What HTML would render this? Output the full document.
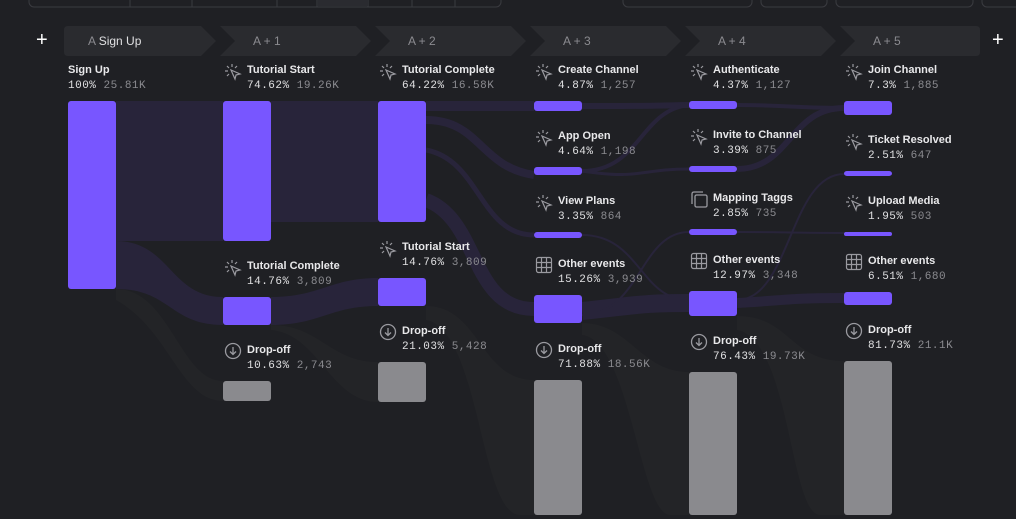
<!DOCTYPE html>
<html><head><meta charset="utf-8"><style>
body{margin:0;width:1016px;height:519px;background:#1f2024;overflow:hidden;font-family:"Liberation Sans",sans-serif;position:relative}
.l{position:absolute;color:#e8e8ea;font-size:11px;font-weight:bold;white-space:nowrap}
.s{position:absolute;font-family:"Liberation Mono",monospace;font-size:11px;color:#e0e0e2;white-space:nowrap;letter-spacing:0.5px}
.s span{color:#8b8b90}
.hd{position:absolute;top:34px;font-size:12px;color:#8b8b90}
.pl{position:absolute;top:30px;color:#fff;font-size:20px;line-height:20px}
</style></head><body>
<svg width="1016" height="519" style="position:absolute;left:0;top:0">
<g fill="none" stroke="#3a3b40">
<rect x="29" y="-10" width="472" height="17" rx="5"/>
<line x1="130" y1="-2" x2="130" y2="7"/><line x1="192" y1="-2" x2="192" y2="7"/><line x1="277" y1="-2" x2="277" y2="7"/><line x1="317" y1="-2" x2="317" y2="7"/><line x1="368" y1="-2" x2="368" y2="7"/><line x1="412" y1="-2" x2="412" y2="7"/><line x1="455" y1="-2" x2="455" y2="7"/>
<rect x="623" y="-10" width="129" height="17" rx="5"/><rect x="761" y="-10" width="66" height="17" rx="5"/><rect x="836" y="-10" width="137" height="17" rx="5"/><rect x="982" y="-10" width="50" height="17" rx="5"/>
</g>
<rect x="318" y="-2" width="50" height="8" fill="#2a2b30"/>
<g fill="#2a2b2f">
<path d="M68 26H201L216 41L201 56H68Q64 56 64 52V30Q64 26 68 26Z"/>
<path d="M220 26H356L371 41L356 56H220L235 41Z"/>
<path d="M375 26H511L526 41L511 56H375L390 41Z"/>
<path d="M530 26H666L681 41L666 56H530L545 41Z"/>
<path d="M685 26H821L836 41L821 56H685L700 41Z"/>
<path d="M840 26H976Q980 26 980 30V52Q980 56 976 56H840L855 41Z"/>
</g>
<g fill="#232427">
<path d="M116 289C170 289 180 381 223 381V401C180 401 170 330 116 300Z"/>
<path d="M271 325C320 325 330 362 378 362V402C330 402 320 335 271 330Z"/>
<path d="M426 306C480 306 480 380 534 380V515H520C480 515 480 330 426 320Z"/>
<path d="M582 323C630 323 640 372 689 372V515H670C640 515 630 340 582 335Z"/>
<path d="M737 316C790 316 790 361 844 361V515H820C790 515 790 340 737 330Z"/>
</g>
<g fill="#28243a">
<rect x="116" y="101" width="107" height="140"/>
<path d="M116 241C170 241 170 297 223 297V325C170 325 170 289 116 289Z"/>
<rect x="271" y="101" width="107" height="121"/>
<path d="M271 297C320 297 330 278 378 278V306C330 306 320 325 271 325Z"/>
<path d="M426 101H534V111H426Z"/>
<path d="M426 120C480 120 480 167 534 175" stroke="#28243a" stroke-width="8" fill="none"/>
<path d="M426 150C480 160 480 235 534 235" stroke="#28243a" stroke-width="5" fill="none"/>
<path d="M426 200C480 220 470 309 534 309" stroke="#28243a" stroke-width="14" fill="none"/>
<path d="M582 311C640 305 640 303 689 303" stroke="#28243a" stroke-width="18" fill="none"/>
<path d="M737 303C790 300 790 298 844 298" stroke="#28243a" stroke-width="10" fill="none"/>
<path d="M582 106C640 106 640 106 689 105" stroke="#28243a" stroke-width="6" fill="none"/>
<path d="M582 171C640 171 640 110 689 105" stroke="#28243a" stroke-width="4" fill="none"/>
<path d="M582 171C640 180 640 169 689 169" stroke="#28243a" stroke-width="3" fill="none"/>
<path d="M737 169C790 169 790 108 844 108" stroke="#28243a" stroke-width="6" fill="none"/>
<path d="M737 105C790 105 790 108 844 108" stroke="#28243a" stroke-width="4" fill="none"/>
<path d="M737 232C790 232 790 233 844 233" stroke="#28243a" stroke-width="2" fill="none"/>
<path d="M737 300C790 300 790 174 844 174" stroke="#28243a" stroke-width="2" fill="none"/>
<path d="M582 235C640 235 640 300 689 300" stroke="#28243a" stroke-width="2" fill="none"/>
<path d="M582 315C640 315 640 232 689 232" stroke="#28243a" stroke-width="2" fill="none"/>
</g>
<g fill="#7856ff">
<rect x="68" y="101" width="48" height="188" rx="3"/>
<rect x="223" y="101" width="48" height="140" rx="3"/><rect x="223" y="297" width="48" height="28" rx="3"/>
<rect x="378" y="101" width="48" height="121" rx="3"/><rect x="378" y="278" width="48" height="28" rx="3"/>
<rect x="534" y="101" width="48" height="10" rx="3"/><rect x="534" y="167" width="48" height="8" rx="3"/><rect x="534" y="232" width="48" height="6" rx="3"/><rect x="534" y="295" width="48" height="28" rx="3"/>
<rect x="689" y="101" width="48" height="8" rx="3"/><rect x="689" y="166" width="48" height="6" rx="3"/><rect x="689" y="229" width="48" height="6" rx="3"/><rect x="689" y="291" width="48" height="25" rx="3"/>
<rect x="844" y="101" width="48" height="14" rx="3"/><rect x="844" y="171" width="48" height="5" rx="3"/><rect x="844" y="232" width="48" height="4" rx="2"/><rect x="844" y="292" width="48" height="13" rx="3"/>
</g>
<g fill="#8a8a8e">
<rect x="223" y="381" width="48" height="20" rx="3"/><rect x="378" y="362" width="48" height="40" rx="3"/>
<rect x="534" y="380" width="48" height="135" rx="3"/><rect x="689" y="372" width="48" height="143" rx="3"/><rect x="844" y="361" width="48" height="154" rx="3"/>
</g>
<defs>
<g id="ck" fill="none" stroke="#9a9aa0" stroke-width="1.2"><path d="M7 0V3M2 2L4 4M0 7H3M2 12L4 10M12 2L10 4"/><path d="M6 6L15 10L11 11L10 15Z"/></g>
<g id="dr" fill="none" stroke="#9a9aa0" stroke-width="1.3"><circle cx="8" cy="8" r="7.5"/><path d="M8 4V11M5 8.5L8 11.5L11 8.5"/></g>
<g id="gr" fill="none" stroke="#9a9aa0" stroke-width="1.2"><rect x="0.5" y="0.5" width="15" height="15" rx="2"/><path d="M5.5 1V15M10.5 1V15M1 5.5H15M1 10.5H15"/></g>
<g id="cp" fill="none" stroke="#9a9aa0" stroke-width="1.3"><path d="M1 13V3Q1 1 3 1H12"/><rect x="4" y="4" width="12" height="12" rx="1.5"/></g>
</defs>
<use href="#ck" x="225" y="64"/><use href="#ck" x="380" y="64"/><use href="#ck" x="536" y="64"/><use href="#ck" x="691" y="64"/><use href="#ck" x="846" y="64"/>
<use href="#ck" x="225" y="260"/><use href="#ck" x="380" y="241"/><use href="#ck" x="536" y="130"/><use href="#ck" x="536" y="195"/><use href="#ck" x="691" y="129"/><use href="#ck" x="846" y="134"/><use href="#ck" x="846" y="195"/>
<use href="#dr" x="225" y="343"/><use href="#dr" x="380" y="324"/><use href="#dr" x="536" y="342"/><use href="#dr" x="691" y="334"/><use href="#dr" x="846" y="323"/>
<use href="#gr" x="536" y="257"/><use href="#gr" x="691" y="253"/><use href="#gr" x="846" y="254"/>
<use href="#cp" x="691" y="191"/>
</svg>
<div class="pl" style="left:36px">+</div><div class="pl" style="left:992px">+</div>
<div class="hd" style="left:88px"><span>A</span> <span style="color:#e0e0e2">Sign Up</span></div>
<div class="hd" style="left:253px">A + 1</div><div class="hd" style="left:408px">A + 2</div><div class="hd" style="left:563px">A + 3</div><div class="hd" style="left:718px">A + 4</div><div class="hd" style="left:873px">A + 5</div>

<div class="l" style="left:68px;top:64px">Sign Up</div><div class="s" style="left:68px;top:80px">100% <span>25.81K</span></div>

<div class="l" style="left:247px;top:64px">Tutorial Start</div><div class="s" style="left:247px;top:80px">74.62% <span>19.26K</span></div>
<div class="l" style="left:247px;top:260px">Tutorial Complete</div><div class="s" style="left:247px;top:276px">14.76% <span>3,809</span></div>
<div class="l" style="left:247px;top:344px">Drop-off</div><div class="s" style="left:247px;top:360px">10.63% <span>2,743</span></div>

<div class="l" style="left:402px;top:64px">Tutorial Complete</div><div class="s" style="left:402px;top:80px">64.22% <span>16.58K</span></div>
<div class="l" style="left:402px;top:241px">Tutorial Start</div><div class="s" style="left:402px;top:257px">14.76% <span>3,809</span></div>
<div class="l" style="left:402px;top:325px">Drop-off</div><div class="s" style="left:402px;top:341px">21.03% <span>5,428</span></div>

<div class="l" style="left:558px;top:64px">Create Channel</div><div class="s" style="left:558px;top:80px">4.87% <span>1,257</span></div>
<div class="l" style="left:558px;top:130px">App Open</div><div class="s" style="left:558px;top:146px">4.64% <span>1,198</span></div>
<div class="l" style="left:558px;top:195px">View Plans</div><div class="s" style="left:558px;top:211px">3.35% <span>864</span></div>
<div class="l" style="left:558px;top:258px">Other events</div><div class="s" style="left:558px;top:274px">15.26% <span>3,939</span></div>
<div class="l" style="left:558px;top:343px">Drop-off</div><div class="s" style="left:558px;top:359px">71.88% <span>18.56K</span></div>

<div class="l" style="left:713px;top:64px">Authenticate</div><div class="s" style="left:713px;top:80px">4.37% <span>1,127</span></div>
<div class="l" style="left:713px;top:129px">Invite to Channel</div><div class="s" style="left:713px;top:145px">3.39% <span>875</span></div>
<div class="l" style="left:713px;top:192px">Mapping Taggs</div><div class="s" style="left:713px;top:208px">2.85% <span>735</span></div>
<div class="l" style="left:713px;top:254px">Other events</div><div class="s" style="left:713px;top:270px">12.97% <span>3,348</span></div>
<div class="l" style="left:713px;top:335px">Drop-off</div><div class="s" style="left:713px;top:351px">76.43% <span>19.73K</span></div>

<div class="l" style="left:868px;top:64px">Join Channel</div><div class="s" style="left:868px;top:80px">7.3% <span>1,885</span></div>
<div class="l" style="left:868px;top:134px">Ticket Resolved</div><div class="s" style="left:868px;top:150px">2.51% <span>647</span></div>
<div class="l" style="left:868px;top:195px">Upload Media</div><div class="s" style="left:868px;top:211px">1.95% <span>503</span></div>
<div class="l" style="left:868px;top:255px">Other events</div><div class="s" style="left:868px;top:271px">6.51% <span>1,680</span></div>
<div class="l" style="left:868px;top:324px">Drop-off</div><div class="s" style="left:868px;top:340px">81.73% <span>21.1K</span></div>
</body></html>
